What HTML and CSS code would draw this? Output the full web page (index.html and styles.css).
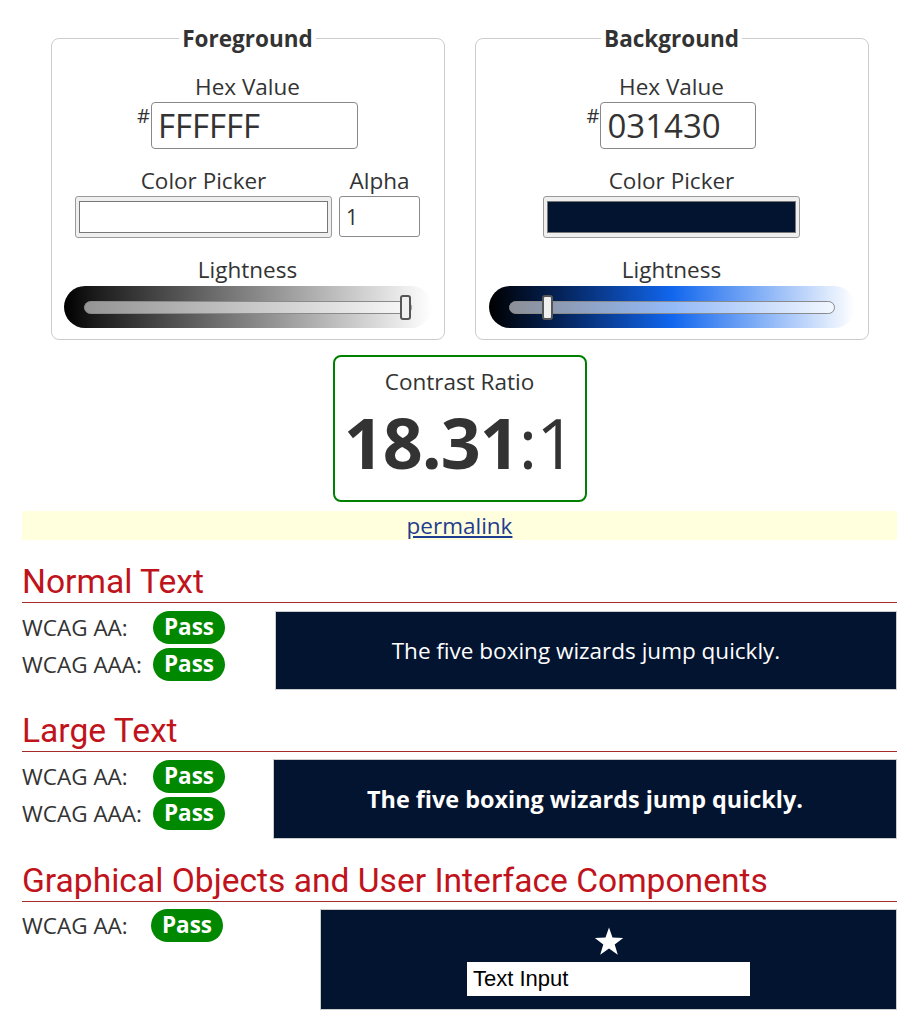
FILE: index.html
```html
<!DOCTYPE html>
<html lang="en">
<head>
<meta charset="utf-8">
<title>Contrast Checker</title>
<link rel="stylesheet" href="styles.css">
</head>
<body>
<main class="page">
  <div class="panels">
    <section class="panel">
      <div class="panel-title">Foreground</div>
      <div class="label">Hex Value</div>
      <div class="hex-row">
        <span class="hash">#</span>
        <input class="hex-input hex-fg" type="text" value="FFFFFF">
      </div>
      <div class="picker-row">
        <div class="field">
          <div class="label">Color Picker</div>
          <div class="swatch"><div class="swatch-fill fill-white"></div></div>
        </div>
        <div class="field">
          <div class="label">Alpha</div>
          <input class="alpha-input" type="text" value="1">
        </div>
      </div>
      <div class="label label-light">Lightness</div>
      <div class="slider slider-fg">
        <div class="track"><div class="thumb" style="left: calc((100% - 11px) * 1)"></div></div>
      </div>
    </section>
    <section class="panel">
      <div class="panel-title">Background</div>
      <div class="label">Hex Value</div>
      <div class="hex-row">
        <span class="hash">#</span>
        <input class="hex-input hex-bg" type="text" value="031430">
      </div>
      <div class="picker-row">
        <div class="field">
          <div class="label">Color Picker</div>
          <div class="swatch"><div class="swatch-fill fill-navy"></div></div>
        </div>
      </div>
      <div class="label label-light">Lightness</div>
      <div class="slider slider-bg">
        <div class="track"><div class="thumb" style="left: calc((100% - 11px) * 0.105)"></div></div>
      </div>
    </section>
  </div>

  <div class="ratio-box">
    <div class="ratio-label">Contrast Ratio</div>
    <div class="ratio-value"><b>18.31</b>:1</div>
  </div>

  <div class="permalink-bar"><a href="#" class="permalink">permalink</a></div>

  <section class="result">
    <h2 class="result-title">Normal Text</h2>
    <div class="result-body">
      <div class="checks checks-normal">
        <div class="check"><span class="check-label">WCAG AA:</span><span class="pass">Pass</span></div>
        <div class="check"><span class="check-label">WCAG AAA:</span><span class="pass">Pass</span></div>
      </div>
      <div class="sample sample-normal">The five boxing wizards jump quickly.</div>
    </div>
  </section>

  <section class="result result-large">
    <h2 class="result-title">Large Text</h2>
    <div class="result-body result-body-tight">
      <div class="checks checks-large">
        <div class="check"><span class="check-label">WCAG AA:</span><span class="pass">Pass</span></div>
        <div class="check"><span class="check-label">WCAG AAA:</span><span class="pass">Pass</span></div>
      </div>
      <div class="sample sample-large">The five boxing wizards jump quickly.</div>
    </div>
  </section>

  <section class="result result-ui">
    <h2 class="result-title">Graphical Objects and User Interface Components</h2>
    <div class="result-body result-body-tight">
      <div class="checks checks-ui">
        <div class="check"><span class="check-label check-label-ui">WCAG AA:</span><span class="pass">Pass</span></div>
      </div>
      <div class="sample sample-ui">
        <svg class="star" width="30" height="29" viewBox="0 0 30 29" aria-hidden="true">
          <polygon points="15,0.5 18.5,10.6 29.2,10.9 20.7,17.4 23.8,27.7 15,21.6 6.2,27.7 9.3,17.4 0.8,10.9 11.5,10.6" fill="#ffffff"/>
        </svg>
        <div class="ui-input">Text Input</div>
      </div>
    </div>
  </section>
</main>
</body>
</html>
```

FILE: styles.css
```css
* { box-sizing: border-box; }

html, body {
  margin: 0;
  padding: 0;
  background: #ffffff;
}

body {
  font-family: "Open Sans", "DejaVu Sans", sans-serif;
  color: #333333;
  font-size: 22.5px;
}

.page {
  padding: 0 13px 20px 22px;
}

/* ---------- Panels ---------- */
.panels {
  display: flex;
  justify-content: center;
  gap: 30px;
  padding-top: 38px;
}

.panel {
  width: 394px;
  border: 1px solid #cccccc;
  border-radius: 8px;
  padding: 0 0 11px;
  display: flex;
  flex-direction: column;
  align-items: center;
}

.panel-title {
  margin-top: -15px;
  background: #ffffff;
  padding: 0 3px;
  font-weight: 700;
  font-size: 22.5px;
  line-height: 30px;
  color: #333333;
}

.label {
  font-size: 22.5px;
  line-height: 30px;
  margin-top: 18px;
  text-align: center;
}

.hex-row {
  display: flex;
  align-items: flex-start;
}

.hash {
  font-size: 20px;
  line-height: 20px;
  margin-top: 4px;
  margin-right: 1px;
}

.hex-input {
  height: 47px;
  border: 1px solid #888888;
  border-radius: 4px;
  font-family: "Open Sans", sans-serif;
  font-size: 33px;
  color: #333333;
  padding: 0 0 0 6px;
  margin: 0;
  background: #ffffff;
}

.hex-fg { width: 207px; }
.hex-bg { width: 156px; }

.picker-row {
  display: flex;
  gap: 7px;
  margin-top: 0;
}

.field {
  display: flex;
  flex-direction: column;
  align-items: center;
}

.field .label {
  margin-top: 17px;
  margin-bottom: 0;
}

.swatch {
  width: 257px;
  height: 42px;
  background: #efefef;
  border: 1px solid #9a9a9a;
  border-radius: 3px;
  padding: 4px 3px;
}

.swatch-fill {
  width: 100%;
  height: 100%;
  border: 1px solid #777777;
}

.fill-white { background: #ffffff; }
.fill-navy { background: #031430; }

.alpha-input {
  width: 81px;
  height: 41px;
  border: 1px solid #8a8a8a;
  border-radius: 3px;
  font-family: "Open Sans", sans-serif;
  font-size: 21px;
  color: #333333;
  padding: 0 0 0 6px;
  margin: 0;
  background: #ffffff;
}

.label-light {
  margin-top: 17px;
  margin-bottom: 1px;
}

.slider {
  height: 42px;
  border-radius: 21px;
  padding: 0 20px;
  display: flex;
  align-items: center;
}

.slider-fg {
  width: 368px;
  background: linear-gradient(to right, #000000 0%, #1a1a1a 8%, #ffffff 100%);
}

.slider-bg {
  width: 366px;
  background: linear-gradient(to right, #000000 0%, #05245c 20%, #1166ee 50%, #ffffff 100%);
}

.track {
  position: relative;
  flex: 1;
  height: 13px;
  border: 1px solid #8a8a8a;
  border-radius: 7px;
  background: rgba(255, 255, 255, 0.55);
}

.thumb {
  position: absolute;
  top: -7px;
  width: 11px;
  height: 25px;
  background: #efefef;
  border: 2px solid #555555;
  border-radius: 3px;
}

/* ---------- Contrast ratio ---------- */
.ratio-box {
  width: 254px;
  height: 147px;
  margin: 15px auto 0;
  border: 2px solid #008000;
  border-radius: 8px;
  text-align: center;
  padding-top: 10px;
}

.ratio-label {
  font-size: 22.5px;
  line-height: 30px;
}

.ratio-value {
  font-size: 70px;
  line-height: 80px;
  letter-spacing: -1px;
  margin-top: 5px;
}

.ratio-value b {
  font-weight: 700;
}

.permalink-bar {
  margin-top: 9px;
  height: 29px;
  background: #ffffdd;
  text-align: center;
  font-size: 22.5px;
  line-height: 29px;
}

.permalink {
  color: #1f3c8f;
  text-decoration: underline;
}

/* ---------- Results ---------- */
.result {
  margin-top: 22px;
}

.result-large {
  margin-top: 21px;
}

.result-ui {
  margin-top: 22px;
}

.result-title {
  margin: 0;
  font-family: Roboto, "Liberation Sans", sans-serif;
  font-weight: 400;
  font-size: 33.6px;
  line-height: 39px;
  color: #c0141c;
  border-bottom: 1px solid #a52a2a;
  padding-bottom: 1px;
}

.result-body {
  display: flex;
  align-items: flex-start;
  margin-top: 8px;
}

.result-body-tight {
  margin-top: 7px;
}

.checks {
  display: flex;
  flex-direction: column;
  gap: 4px;
  flex: none;
}

.checks-normal { width: 253px; }
.checks-large { width: 251px; margin-top: 1px; }
.checks-ui { width: 298px; }

.check {
  display: flex;
  align-items: center;
  height: 33px;
}

.check-label {
  width: 131px;
  font-size: 22.5px;
  line-height: 30px;
}

.check-label-ui {
  width: 129px;
}

.pass {
  display: inline-block;
  width: 72px;
  height: 33px;
  border-radius: 17px;
  background: #008800;
  color: #ffffff;
  font-weight: 700;
  font-size: 22.5px;
  line-height: 32px;
  text-align: center;
}

.sample {
  flex: 1;
  background: #031430;
  border: 1px solid #cccccc;
  color: #ffffff;
  text-align: center;
}

.sample-normal {
  padding: 23px 10px;
  font-size: 22.5px;
  line-height: 31px;
}

.sample-large {
  padding: 23px 10px;
  font-size: 23.4px;
  line-height: 32px;
  font-weight: 700;
}

.sample-ui {
  height: 101px;
  padding-top: 17px;
  display: flex;
  flex-direction: column;
  align-items: center;
}

.star {
  display: block;
}

.ui-input {
  margin-top: 6px;
  width: 283px;
  height: 34px;
  background: #ffffff;
  color: #000000;
  font-family: "Liberation Sans", Arial, sans-serif;
  font-size: 22px;
  line-height: 34px;
  text-align: left;
  padding-left: 6px;
}
```
